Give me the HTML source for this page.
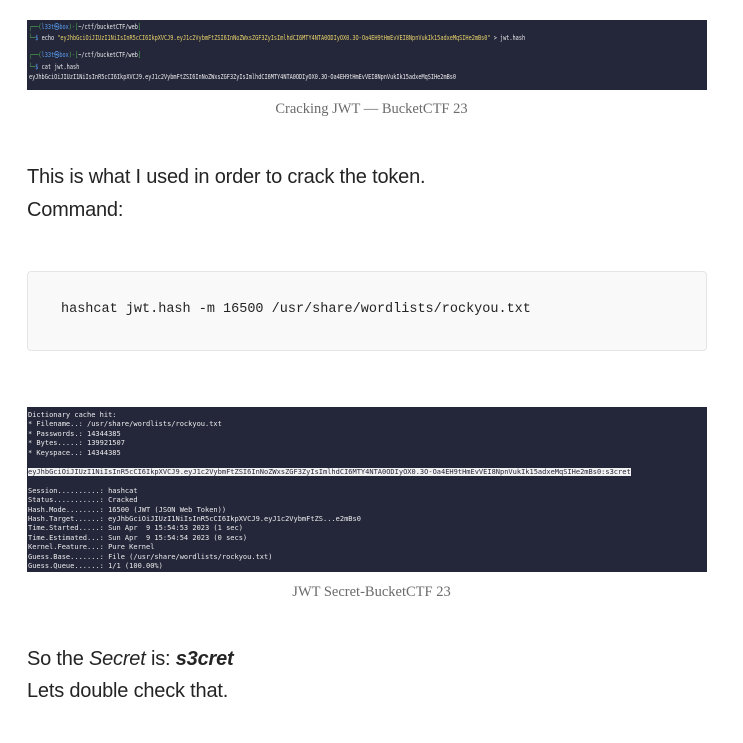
<!DOCTYPE html>
<html><head><meta charset="utf-8"><style>
*{margin:0;padding:0;box-sizing:border-box}
body{width:743px;height:743px;background:#fff;position:relative;overflow:hidden;font-family:"Liberation Sans",sans-serif;color:#242424}
.term{position:absolute;left:27px;background:#24263a;color:#ececec;font-family:"DejaVu Sans Mono","Liberation Mono",monospace;white-space:pre;overflow:hidden}
.t1 div{position:absolute;left:2px;font-size:7px;line-height:8px;transform:scaleX(0.745);transform-origin:0 0;white-space:pre}
.cap{position:absolute;left:0;width:743px;text-align:center;font-family:"Liberation Serif",serif;font-size:14.5px;color:#6b6b6b}
.p{position:absolute;left:27px;font-size:20px;letter-spacing:-0.2px}
.code{position:absolute;left:27px;top:271px;width:680px;height:80px;background:#f9f9f9;border:1px solid #e5e5e5;border-radius:4px}
.code span{position:absolute;left:33px;top:30px;font-family:"Liberation Mono",monospace;font-size:13.5px;color:#242424}
.g{color:#4fb84f}.b{color:#5aa0f0}.y{color:#e8d36b}
</style></head><body>
<div class="term t1" style="top:20px;width:680px;height:70px">
<div style="top:3px"><span class="g">┌──(</span><span class="b">l33t㉿box</span><span class="g">)-[</span>~/ctf/bucketCTF/web<span class="g">]</span></div>
<div style="top:14px"><span class="g">└─</span><span class="b">$</span> echo <span class="y">"eyJhbGciOiJIUzI1NiIsInR5cCI6IkpXVCJ9.eyJ1c2VybmFtZSI6InNoZWxsZGF3ZyIsImlhdCI6MTY4NTA0ODIyOX0.3O-Oa4EH9tHmEvVEI8NpnVukIk15adxeMqSIHe2mBs0"</span> &gt; jwt.hash</div>
<div style="top:31px"><span class="g">┌──(</span><span class="b">l33t㉿box</span><span class="g">)-[</span>~/ctf/bucketCTF/web<span class="g">]</span></div>
<div style="top:43px"><span class="g">└─</span><span class="b">$</span> cat jwt.hash</div>
<div style="top:53px">eyJhbGciOiJIUzI1NiIsInR5cCI6IkpXVCJ9.eyJ1c2VybmFtZSI6InNoZWxsZGF3ZyIsImlhdCI6MTY4NTA0ODIyOX0.3O-Oa4EH9tHmEvVEI8NpnVukIk15adxeMqSIHe2mBs0</div>
</div>
<div class="cap" style="top:101px">Cracking JWT — BucketCTF 23</div>
<div class="p" style="top:166px">This is what I used in order to crack the token.</div>
<div class="p" style="top:199px">Command:</div>
<div class="code"><span>hashcat jwt.hash -m 16500 /usr/share/wordlists/rockyou.txt</span></div>
<div class="term" style="top:407px;width:680px;height:165px;font-size:7px;line-height:9.45px;padding:4px 0 0 1px">Dictionary cache hit:
* Filename..: /usr/share/wordlists/rockyou.txt
* Passwords.: 14344385
* Bytes.....: 139921507
* Keyspace..: 14344385

<span style="background:#f0f0f0;color:#24263a">eyJhbGciOiJIUzI1NiIsInR5cCI6IkpXVCJ9.eyJ1c2VybmFtZSI6InNoZWxsZGF3ZyIsImlhdCI6MTY4NTA0ODIyOX0.3O-Oa4EH9tHmEvVEI8NpnVukIk15adxeMqSIHe2mBs0:s3cret</span>

Session..........: hashcat
Status...........: Cracked
Hash.Mode........: 16500 (JWT (JSON Web Token))
Hash.Target......: eyJhbGciOiJIUzI1NiIsInR5cCI6IkpXVCJ9.eyJ1c2VybmFtZS...e2mBs0
Time.Started.....: Sun Apr  9 15:54:53 2023 (1 sec)
Time.Estimated...: Sun Apr  9 15:54:54 2023 (0 secs)
Kernel.Feature...: Pure Kernel
Guess.Base.......: File (/usr/share/wordlists/rockyou.txt)
Guess.Queue......: 1/1 (100.00%)</div>
<div class="cap" style="top:584px">JWT Secret-BucketCTF 23</div>
<div class="p" style="top:648px">So the <i>Secret</i> is: <b><i>s3cret</i></b></div>
<div class="p" style="top:680px">Lets double check that.</div>
</body></html>
